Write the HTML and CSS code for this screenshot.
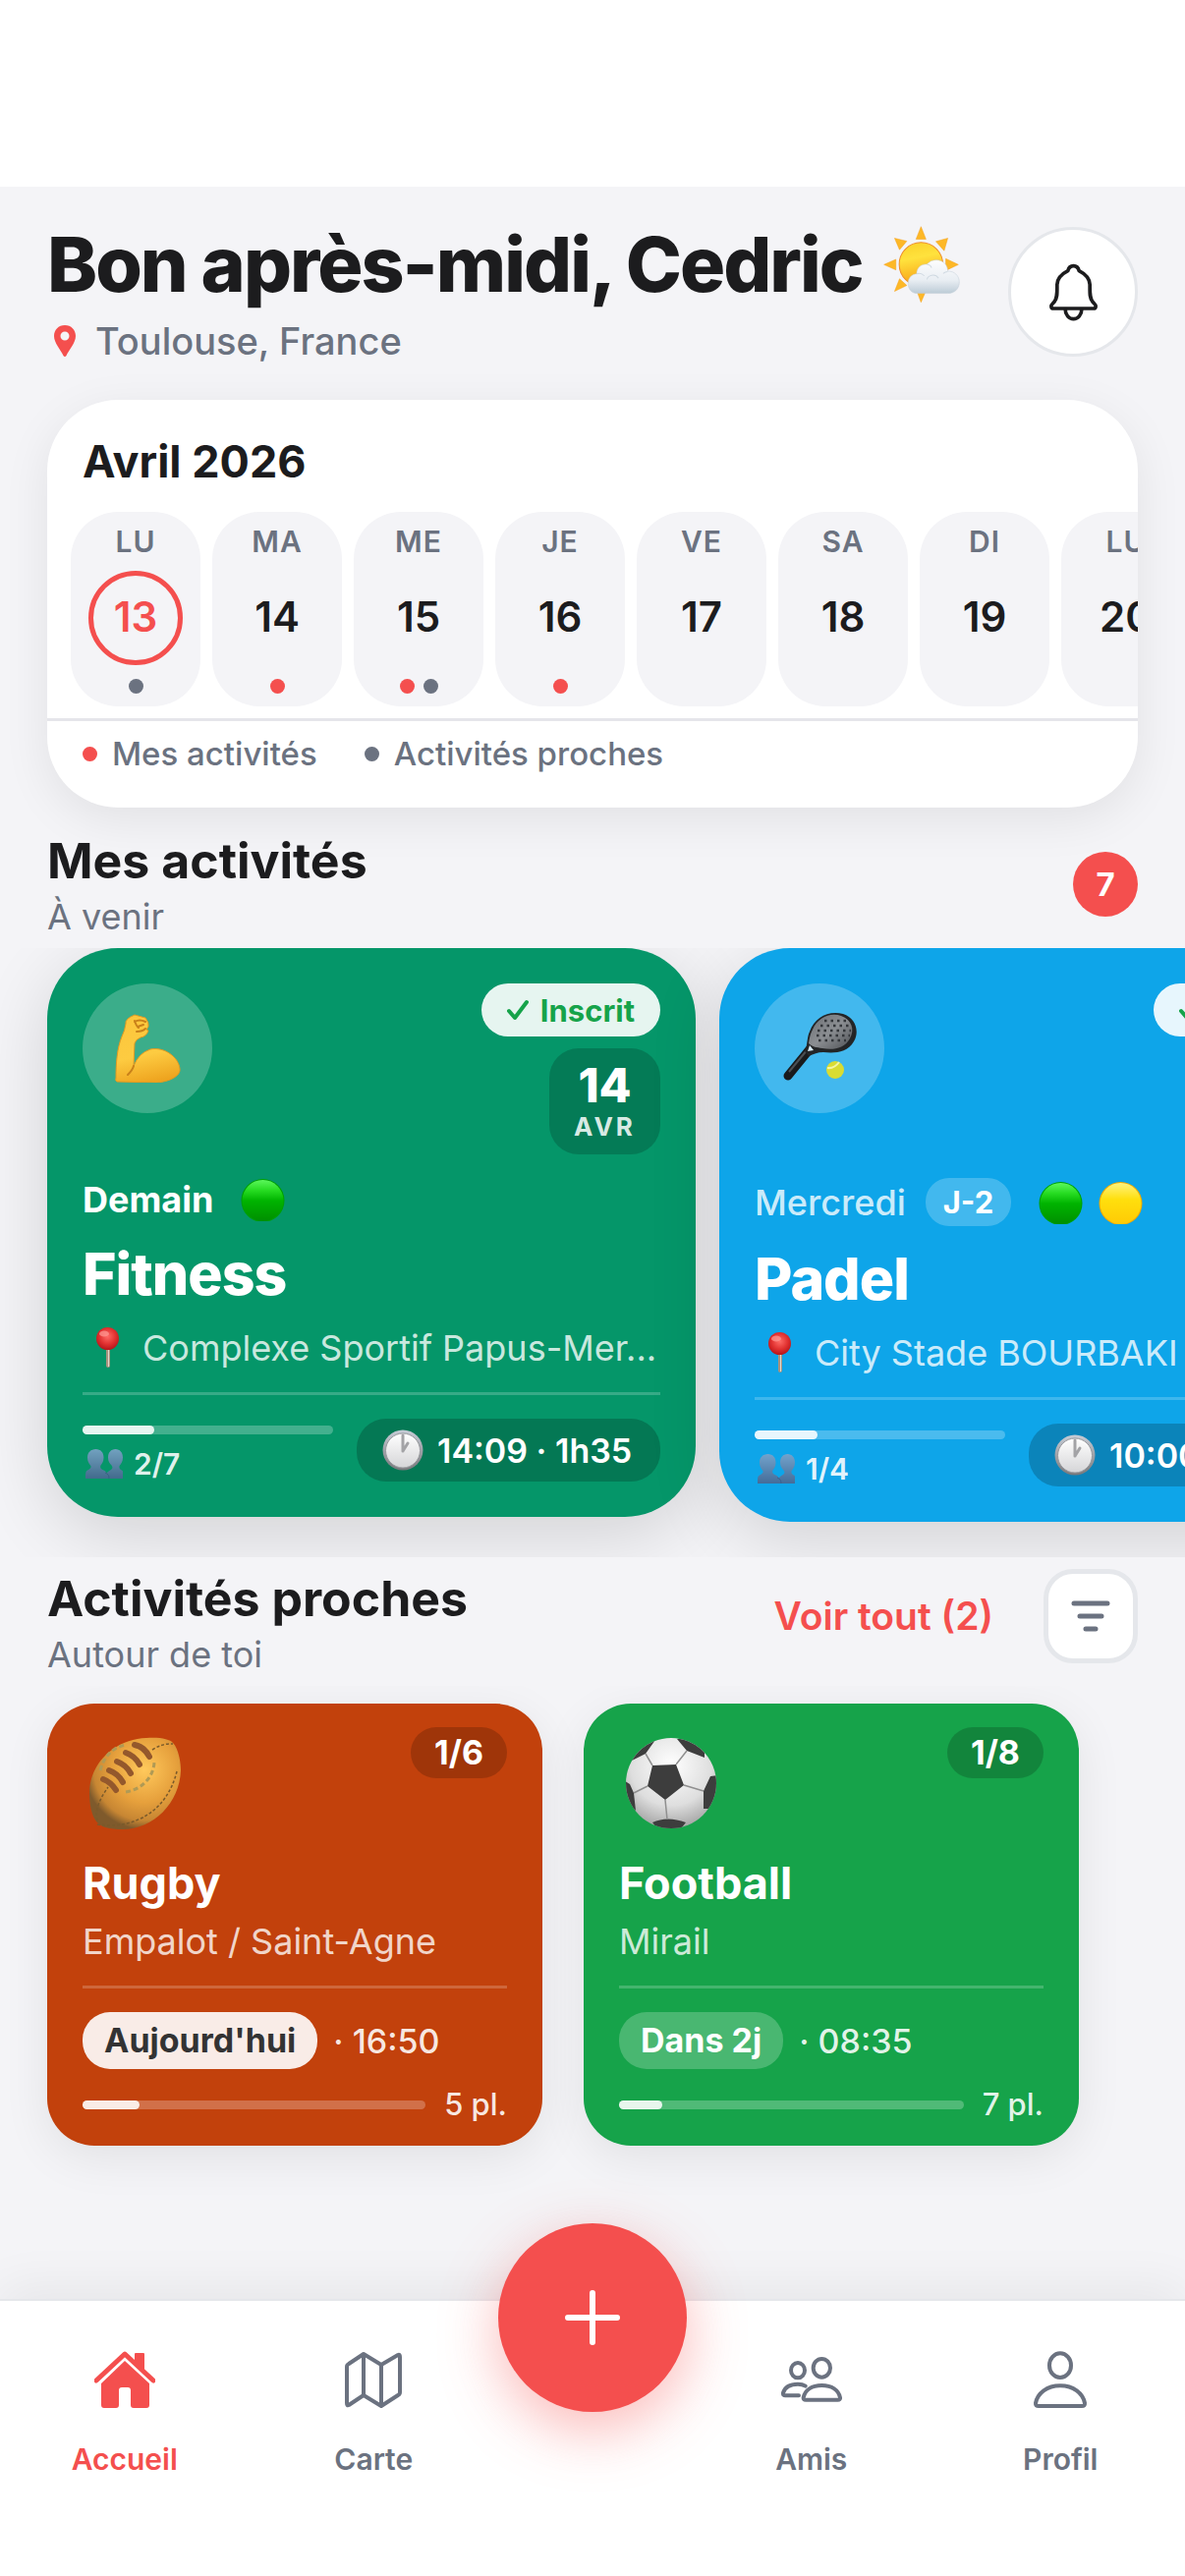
FILE: index.html
```html
<!DOCTYPE html>
<html lang="fr">
<head>
<meta charset="utf-8">
<meta name="viewport" content="width=device-width, initial-scale=1">
<title>Accueil</title>
<link rel="stylesheet" href="styles.css">
</head>
<body>

<svg class="sprite" width="0" height="0" aria-hidden="true">
  <defs>
    <linearGradient id="g-sun" x1="0.3" y1="0" x2="0.5" y2="1"><stop offset="0" stop-color="#fbd32c"/><stop offset="0.35" stop-color="#ffe23d"/><stop offset="1" stop-color="#f79a12"/></linearGradient>
    <linearGradient id="g-cloud" x1="0" y1="0" x2="0" y2="1"><stop offset="0" stop-color="#fdfdfe"/><stop offset="0.6" stop-color="#e9eef3"/><stop offset="1" stop-color="#bccbd6"/></linearGradient>
    <linearGradient id="g-arm" x1="0.3" y1="0" x2="0.5" y2="1"><stop offset="0" stop-color="#fcc63c"/><stop offset="0.6" stop-color="#fdcb41"/><stop offset="1" stop-color="#eea41f"/></linearGradient>
    <linearGradient id="g-green" x1="0" y1="0" x2="0" y2="1"><stop offset="0" stop-color="#5cf75c"/><stop offset="0.25" stop-color="#27dc22"/><stop offset="0.5" stop-color="#00b400"/><stop offset="1" stop-color="#008f00"/></linearGradient>
    <linearGradient id="g-yellow" x1="0" y1="0" x2="0" y2="1"><stop offset="0" stop-color="#fff27d"/><stop offset="0.4" stop-color="#ffdf0d"/><stop offset="1" stop-color="#ffca05"/></linearGradient>
    <linearGradient id="g-racket" x1="0" y1="0" x2="1" y2="1"><stop offset="0" stop-color="#6d7074"/><stop offset="0.5" stop-color="#8b8e92"/><stop offset="1" stop-color="#4e5155"/></linearGradient>
    <radialGradient id="g-pin" cx="0.5" cy="0.4" r="0.6"><stop offset="0" stop-color="#ff6b66"/><stop offset="0.6" stop-color="#e0302f"/><stop offset="1" stop-color="#b5161b"/></radialGradient>
    <linearGradient id="g-people" x1="0" y1="0" x2="0" y2="1"><stop offset="0" stop-color="#7ea3c9"/><stop offset="1" stop-color="#4a6791"/></linearGradient>
    <linearGradient id="g-clock" x1="0" y1="0" x2="0" y2="1"><stop offset="0" stop-color="#ffffff"/><stop offset="1" stop-color="#d5d5d7"/></linearGradient>
    <linearGradient id="g-rim" x1="0" y1="0" x2="0" y2="1"><stop offset="0" stop-color="#c6ccd6"/><stop offset="1" stop-color="#77787b"/></linearGradient>
    <radialGradient id="g-rugby" cx="0.6" cy="0.35" r="0.65"><stop offset="0" stop-color="#ffc95c"/><stop offset="0.55" stop-color="#e6a03c"/><stop offset="0.85" stop-color="#c78633"/><stop offset="1" stop-color="#7f5a2c"/></radialGradient>
    <radialGradient id="g-ball" cx="0.5" cy="0.3" r="0.75"><stop offset="0" stop-color="#ffffff"/><stop offset="0.6" stop-color="#dedede"/><stop offset="1" stop-color="#9a9a9a"/></radialGradient>
    <clipPath id="c-ball"><circle cx="46" cy="46" r="46"/></clipPath>

    <symbol id="e-dot-green" viewBox="0 0 45 44"><circle cx="22.5" cy="23" r="22" fill="#00a000"/><circle cx="22.5" cy="23" r="21" fill="url(#g-green)"/></symbol>
    <symbol id="e-dot-yellow" viewBox="0 0 45 44"><circle cx="22.5" cy="23" r="22" fill="#f2a900"/><circle cx="22.5" cy="23" r="21" fill="url(#g-yellow)"/></symbol>
    <symbol id="e-pin" viewBox="0 0 50 42">
      <rect x="24" y="18" width="4" height="23" rx="2" fill="#a9937f"/><rect x="26" y="20" width="1" height="20" fill="#e3d9cd"/>
      <circle cx="25.500" cy="11.500" r="11.500" fill="url(#g-pin)"/><ellipse cx="22" cy="6.500" rx="5" ry="3" fill="#ff9b95" opacity="0.7"/>
    </symbol>
    <symbol id="e-people" viewBox="0 0 38 30">
      <path fill="url(#g-people)" d="M10.500 0c5 0 8 3.500 8 8.500 0 4-1.500 6-3 8-1 2 0 4 3 5 1.500.8 2.500 1.500 3 3 1-2 4-3 5-4 1.500-1.200 1-2.500 0-4-2-2-3.500-4-3.500-8 0-5 3-8.500 7.500-8.500s7.500 3.500 7.500 8.500c0 4-1.500 6-3 8s0 4 2 5c2 1 1 4 1 8.500H0c0-5 0-7.500 2-8.500 3-1.500 4.500-3 3-5s-3-4-3-8C2 3.500 5.500 0 10.500 0z"/>
      <path d="M24 30c0-3-1-5-4-6" fill="none" stroke="#3f5c88" stroke-width="1"/>
    </symbol>
    <symbol id="e-clock" viewBox="0 0 42 42">
      <circle cx="21" cy="21" r="20.500" fill="url(#g-rim)"/><circle cx="21" cy="21.500" r="17.500" fill="url(#g-clock)" stroke="#98999d" stroke-width="1"/>
      <path d="M21 6v16M21 22l5-8" fill="none" stroke="#a3a3a6" stroke-width="3" stroke-linecap="round"/>
    </symbol>
    <symbol id="i-check" viewBox="0 0 22 22"><path d="M2 12l6 7L20 3" fill="none" stroke="currentColor" stroke-width="4" stroke-linecap="round" stroke-linejoin="round"/></symbol>
  </defs>
</svg>

<div class="safe-area"></div>

<main class="screen">
  <header class="greeting">
    <div class="greeting-text">
      <h1 class="greeting-title">Bon après-midi, Cedric
        <svg class="greeting-sun" viewBox="48 38 232 232" aria-hidden="true">
          <g fill="#fdb827" stroke="#f5a21c" stroke-width="1.500">
            <path d="M162 40l15 38h-30zM50 155l36-16v32zM275 155l-38-18v36zM82 75l37 9-22 26zM243 75l-11 38-25-28zM82 236l15-38 22 20zM162 269l-11-30h24z"/>
          </g>
          <circle cx="162" cy="154" r="66" fill="url(#g-sun)" stroke="#ee8f2b" stroke-width="3"/>
          <path fill="url(#g-cloud)" stroke="#c3d0da" stroke-width="1.500" d="M150 242c-16 0-27-13-27-30 0-17 11-28 26-29-1-18 14-31 31-29 7-9 17-13 29-13 20 0 34 15 34 34 20-1 35 14 35 33 0 20-14 34-35 34z"/>
          <path fill="none" stroke="#cfd9e1" stroke-width="3" d="M149 183c8-3 17 0 23 6M180 200c2-13 25-20 35-4M180 155c6 0 12 4 14 10M243 176c-6 0-10 2-14 6"/>
        </svg>
      </h1>
      <p class="greeting-place">
        <svg class="greeting-pin" viewBox="0 0 22 32" aria-hidden="true"><path fill="currentColor" fill-rule="evenodd" d="M11 0c6.500 0 11 4.800 11 11 0 7-7 14.500-9.500 20-.7 1.300-2.300 1.300-3 0C7 25.500 0 18 0 11 0 4.800 4.500 0 11 0zm0 6.500a4.500 4.500 0 1 0 0 9 4.500 4.500 0 0 0 0-9z"/></svg>
        Toulouse, France
      </p>
    </div>
    <button class="bell" type="button" aria-label="Notifications">
      <svg class="bell-icon" viewBox="560 140 152 180" aria-hidden="true"><path fill="none" stroke="currentColor" stroke-width="11" stroke-linejoin="round" d="M636 151c-10 0-15 7-17 15-16 8-32 20-33 42 0 27 1 40-8 52-6 7-10 9-10 14q0 7 8 7h120q8 0 8-7c0-5-4-7-10-14-9-12-8-25-8-52-1-22-17-34-33-42-2-8-7-15-17-15zM611 284a25 29 0 0 0 50 0"/></svg>
    </button>
  </header>

  <section class="calendar">
    <h2 class="calendar-title">Avril 2026</h2>
    <div class="days">
      <button class="day day-today" type="button"><span class="day-name">LU</span><span class="day-number">13</span><span class="day-dots"><i class="dot dot-near"></i></span></button>
      <button class="day" type="button"><span class="day-name">MA</span><span class="day-number">14</span><span class="day-dots"><i class="dot dot-mine"></i></span></button>
      <button class="day" type="button"><span class="day-name">ME</span><span class="day-number">15</span><span class="day-dots"><i class="dot dot-mine"></i><i class="dot dot-near"></i></span></button>
      <button class="day" type="button"><span class="day-name">JE</span><span class="day-number">16</span><span class="day-dots"><i class="dot dot-mine"></i></span></button>
      <button class="day" type="button"><span class="day-name">VE</span><span class="day-number">17</span><span class="day-dots"></span></button>
      <button class="day" type="button"><span class="day-name">SA</span><span class="day-number">18</span><span class="day-dots"></span></button>
      <button class="day" type="button"><span class="day-name">DI</span><span class="day-number">19</span><span class="day-dots"></span></button>
      <button class="day" type="button"><span class="day-name">LU</span><span class="day-number">20</span><span class="day-dots"></span></button>
    </div>
    <div class="legend">
      <span class="legend-item"><i class="dot dot-mine"></i>Mes activités</span>
      <span class="legend-item"><i class="dot dot-near"></i>Activités proches</span>
    </div>
  </section>

  <section>
    <div class="section-head section-head-mine">
      <div>
        <h2 class="section-title">Mes activités</h2>
        <p class="section-sub">À venir</p>
      </div>
      <span class="count">7</span>
    </div>
    <div class="carousel">
      <article class="event event-fitness">
        <div class="event-top">
          <div class="event-icon">
            <svg class="emoji-arm" viewBox="0 0 67 70" aria-hidden="true">
              <path fill="url(#g-arm)" stroke="#e09a22" stroke-width="1" d="M20 1l11 3q4 5 3 9l-2 3 2 1q-2 6-8 7-5 2-6 6l-1 23q5-13 17-17c14-3 29 8 30 20 1 7-10 13-24 14l-40-1q-2-1-1-4c0-14 1-30 6-42q3-6 4-13-1-5 9-9z"/>
              <path fill="none" stroke="#c9811a" stroke-width="2" stroke-linecap="round" d="M20 8q5-3 11 0M23 13l6-2M20 7q2 6 4 7M22 18q6 0 9-3M19 53q-1 4-6 9"/>
            </svg>
          </div>
          <div class="event-side">
            <span class="joined"><svg class="joined-check" aria-hidden="true"><use href="#i-check"/></svg>Inscrit</span>
            <div class="date"><span class="date-day">14</span><span class="date-month">AVR</span></div>
          </div>
        </div>
        <div class="event-when"><span class="when-soon">Demain</span><span class="levels"><svg class="level"><use href="#e-dot-green"/></svg></span></div>
        <h3 class="event-title">Fitness</h3>
        <p class="event-place"><svg class="place-pin" aria-hidden="true"><use href="#e-pin"/></svg><span class="place-name">Complexe Sportif Papus-Mer...</span></p>
        <div class="event-foot">
          <div class="fill"><div class="bar"><div class="bar-value" style="width: 28.57%"></div></div><span class="people"><svg class="people-icon" aria-hidden="true"><use href="#e-people"/></svg>2/7</span></div>
          <span class="time"><svg class="time-clock" aria-hidden="true"><use href="#e-clock"/></svg>14:09 · 1h35</span>
        </div>
      </article>

      <article class="event event-padel">
        <div class="event-top">
          <div class="event-icon">
            <svg class="emoji-padel" viewBox="0 0 78 76" aria-hidden="true">
              <path d="M29 39L7 66" stroke="#191a1c" stroke-width="9" stroke-linecap="round"/><path d="M27 39L8 62" stroke="#4c4f53" stroke-width="2"/>
              <path d="M24 41c3-6 2-14 5-20C34 6 49-1 63 3c13 4 17 18 11 28-7 12-20 12-31 11-6 0-10 2-15 4z" fill="#232527"/>
              <path d="M28 33c1-5 1-8 4-14C37 7 50 1 61 5c11 4 14 14 9 23-6 11-18 12-28 10-6-1-10-1-14-5z" fill="url(#g-racket)"/>
              <g stroke="#33363a" stroke-width="2.500" stroke-dasharray="2.500 4" fill="none"><path d="M44 10h24M40 15h32M37 20h34M36 25h34M38 30h28"/></g>
              <path d="M29 35l4 5-6 1z" fill="#d8ecf8"/>
              <circle cx="55" cy="60" r="9" fill="#d9dc32"/><path d="M47 58q7 1 12-6" fill="none" stroke="#f4f5a4" stroke-width="2"/>
            </svg>
          </div>
          <div class="event-side">
            <span class="joined"><svg class="joined-check" aria-hidden="true"><use href="#i-check"/></svg>Inscrit</span>
            <div class="date"><span class="date-day">15</span><span class="date-month">AVR</span></div>
          </div>
        </div>
        <div class="event-when"><span class="when-later">Mercredi</span><span class="countdown">J-2</span><span class="levels"><svg class="level"><use href="#e-dot-green"/></svg><svg class="level"><use href="#e-dot-yellow"/></svg></span></div>
        <h3 class="event-title">Padel</h3>
        <p class="event-place"><svg class="place-pin" aria-hidden="true"><use href="#e-pin"/></svg><span class="place-name">City Stade BOURBAKI</span></p>
        <div class="event-foot">
          <div class="fill"><div class="bar"><div class="bar-value" style="width: 25%"></div></div><span class="people"><svg class="people-icon" aria-hidden="true"><use href="#e-people"/></svg>1/4</span></div>
          <span class="time"><svg class="time-clock" aria-hidden="true"><use href="#e-clock"/></svg>10:00 · 1h30</span>
        </div>
      </article>
    </div>
  </section>

  <section>
    <div class="section-head section-head-near">
      <div>
        <h2 class="section-title">Activités proches</h2>
        <p class="section-sub">Autour de toi</p>
      </div>
      <div class="section-actions">
        <a class="see-all" href="#proches">Voir tout (2)</a>
        <button class="filter" type="button" aria-label="Filtrer"><svg class="filter-icon" viewBox="0 0 40 34" aria-hidden="true"><path d="M3 4h34M9 17h22M15 30h10" fill="none" stroke="currentColor" stroke-width="5" stroke-linecap="round"/></svg></button>
      </div>
    </div>
    <div class="carousel carousel-near" id="proches">
      <article class="nearby nearby-rugby">
        <div class="nearby-top">
          <svg class="nearby-emoji" viewBox="-7 -11 108 108" aria-hidden="true">
            <path fill="url(#g-rugby)" d="M58 0c13-1 24 1 27 5 5 5 8 18 8 28C92 66 65 93 34 93c-14 0-22-2-27-8C2 78 0 68 0 55 1 24 27 1 58 0z"/>
            <g fill="none" stroke="#7a5a2b" stroke-width="1.500" stroke-dasharray="3 2"><path d="M8 84C5 72 12 60 19 50M64 12q11-7 21-6M8 88c34 5 70-10 81-54"/></g>
            <path d="M37 55c18-3 28-16 29-30M11 33C15 18 24 9 38 7" fill="none" stroke="#b09a55" stroke-width="3" stroke-dasharray="5 3"/>
            <g fill="none" stroke="#94582c" stroke-width="6" stroke-linecap="round"><path d="M14 42q8 3 13 11M20 33q9 3 14 12M28 24q9 3 14 12M37 15q9 3 14 12M46 7q10 2 15 12"/></g>
          </svg>
          <span class="seats">1/6</span>
        </div>
        <h3 class="nearby-title">Rugby</h3>
        <p class="nearby-place">Empalot / Saint-Agne</p>
        <div class="nearby-when"><span class="tag tag-today">Aujourd'hui</span><span>· 16:50</span></div>
        <div class="nearby-fill"><div class="bar bar-wide"><div class="bar-value" style="width: 16.67%"></div></div><span>5 pl.</span></div>
      </article>
      <article class="nearby nearby-football">
        <div class="nearby-top">
          <svg class="nearby-emoji" viewBox="-7 -11 108 108" aria-hidden="true">
            <circle cx="46" cy="46" r="46" fill="url(#g-ball)"/>
            <g clip-path="url(#c-ball)"><path fill="#3d3d3d" d="M27 28l24-1 8 21-19 15-18-14zM30 2L20 16 4 24 5 5 20-5zM52 1l10 12 18 7V0zM93 38l-7 1-7 15v18h14zM27 86q15-7 34 0l-8 10H35zM-1 44l5 3 4 9 2 18-11-9z"/>
            <path fill="none" stroke="#8f8f8f" stroke-width="1.500" d="M27 28l-7-12M51 27l11-14M59 48l20 6M40 63l2 20M22 49L8 56"/></g>
          </svg>
          <span class="seats">1/8</span>
        </div>
        <h3 class="nearby-title">Football</h3>
        <p class="nearby-place">Mirail</p>
        <div class="nearby-when"><span class="tag">Dans 2j</span><span>· 08:35</span></div>
        <div class="nearby-fill"><div class="bar bar-wide"><div class="bar-value" style="width: 12.5%"></div></div><span>7 pl.</span></div>
      </article>
    </div>
  </section>
</main>

<nav class="tabs">
  <a class="tab tab-active" href="#accueil"><svg class="tab-icon" viewBox="0 0 62 58" aria-hidden="true"><path d="M2 30L31 3l29 27" fill="none" stroke="currentColor" stroke-width="5" stroke-linecap="round" stroke-linejoin="round"/><path fill="currentColor" d="M41 3q0-1 1-1h8q1 0 1 1v19L41 12zM31 10l25 23v22q0 3-3 3H40q-3 0-3-3V40q0-3-3-3h-6q-3 0-3 3v15q0 3-3 3H10q-3 0-3-3V33z"/></svg><span>Accueil</span></a>
  <a class="tab" href="#carte"><svg class="tab-icon" viewBox="-1 0 62 58" aria-hidden="true"><path d="M3 16q0-2 2-3L20 3l18 11L55 4q2-1 2 2v36q0 2-2 3L38 56 20 45 5 55q-2 1-2-2zM20 3v42M38 14v42" fill="none" stroke="currentColor" stroke-width="4" stroke-linejoin="round"/></svg><span>Carte</span></a>
  <button class="add" type="button" aria-label="Créer une activité"><svg class="add-icon" viewBox="0 0 56 56" aria-hidden="true"><path d="M28 3v50M3 28h50" stroke="currentColor" stroke-width="6" stroke-linecap="round"/></svg></button>
  <a class="tab" href="#amis"><svg class="tab-icon" viewBox="45 40 186 174" aria-hidden="true"><g fill="none" stroke="currentColor" stroke-width="12" stroke-linecap="round" stroke-linejoin="round"><ellipse cx="96" cy="99" rx="21" ry="23"/><ellipse cx="169" cy="92" rx="26" ry="28"/><path d="M120 189q-8 0-7-7c5-22 25-37 56-37s51 15 56 37q1 7-7 7zM99 176H58q-8 0-7-8c5-17 20-27 45-27q14 0 23 6"/></g></svg><span>Amis</span></a>
  <a class="tab" href="#profil"><svg class="tab-icon" viewBox="807 39 186 174" aria-hidden="true"><g fill="none" stroke="currentColor" stroke-width="12" stroke-linejoin="round"><ellipse cx="900" cy="83" rx="33" ry="37"/><path d="M834 207q-10 0-9-9c6-30 34-53 75-53s69 23 75 53q1 9-9 9z"/></g></svg><span>Profil</span></a>
</nav>

</body>
</html>
```

FILE: styles.css
```css
:root {
  --red: #f44f4e;
  --ink: #1c1c1e;
  --gray: #6b7280;
  --bg: #f4f4f7;
  --line: #e5e5ea;
}

* { box-sizing: border-box; }

body {
  margin: 0;
  min-height: 100vh;
  display: flex;
  flex-direction: column;
  background: var(--bg);
  color: var(--ink);
  font-family: Inter, "Liberation Sans", sans-serif;
  overflow-x: hidden;
}

h1, h2, h3, p { margin: 0; }
button { font: inherit; color: inherit; border: 0; padding: 0; }
a { color: inherit; text-decoration: none; }
svg { display: block; flex: none; }
.sprite { position: absolute; }

.safe-area { height: 190px; background: #fff; }
.screen { flex: 1; }

/* Greeting */
.greeting {
  display: flex;
  align-items: center;
  justify-content: space-between;
  padding: 33px 48px 36px;
}
.greeting-text { display: flex; flex-direction: column; gap: 8px; }
.greeting-title {
  display: flex;
  align-items: center;
  gap: 21px;
  font-size: 77px;
  line-height: 92px;
  font-weight: 800;
  letter-spacing: -2px;
}
.greeting-sun { width: 78px; height: 78px; }
.greeting-place {
  display: flex;
  align-items: center;
  gap: 20px;
  padding-left: 7px;
  font-size: 38px;
  line-height: 48px;
  font-weight: 500;
  color: var(--gray);
}
.greeting-pin { width: 22px; height: 32px; color: var(--red); }
.bell {
  width: 132px;
  height: 132px;
  display: grid;
  place-items: center;
  border: 3px solid #e5e7eb;
  border-radius: 50%;
  background: #fff;
}
.bell-icon { width: 51px; height: 60px; }

/* Calendar */
.calendar {
  margin: 0 48px;
  padding-top: 36px;
  border-radius: 72px;
  background: #fff;
  box-shadow: 0 12px 48px rgba(0, 0, 0, 0.08);
}
.calendar-title {
  padding: 0 36px;
  margin-bottom: 24px;
  font-size: 45px;
  line-height: 54px;
  font-weight: 700;
}
.days {
  display: flex;
  gap: 12px;
  padding: 0 0 12px 24px;
  overflow: hidden;
}
.day {
  flex: 0 0 132px;
  display: flex;
  flex-direction: column;
  align-items: center;
  gap: 12px;
  padding: 12px 0;
  border-radius: 48px;
  background: var(--bg);
}
.day-name {
  font-size: 30px;
  line-height: 36px;
  font-weight: 600;
  letter-spacing: 1px;
  color: var(--gray);
}
.day-number {
  width: 96px;
  height: 96px;
  border: 5px solid transparent;
  border-radius: 50%;
  font-size: 42px;
  line-height: 84px;
  font-weight: 600;
  text-align: center;
}
.day-today .day-number { border-color: var(--red); color: var(--red); }
.day-dots { display: flex; align-items: center; gap: 9px; height: 18px; }
.dot { flex: none; width: 15px; height: 15px; border-radius: 50%; }
.dot-mine { background: var(--red); }
.dot-near { background: var(--gray); }
.legend {
  display: flex;
  gap: 48px;
  padding: 12px 36px 34px;
  border-top: 3px solid var(--line);
  font-size: 33px;
  line-height: 42px;
  font-weight: 500;
  color: var(--gray);
}
.legend-item { display: flex; align-items: center; gap: 15px; }

/* Section headings */
.section-head {
  display: flex;
  justify-content: space-between;
  padding: 24px 48px 11px;
}
.section-head-mine { align-items: center; }
.section-head-near { padding-top: 12px; }
.section-title { font-size: 50px; line-height: 60px; font-weight: 700; }
.section-sub { margin-top: 6px; font-size: 36px; line-height: 42px; color: var(--gray); }
.count {
  width: 66px;
  height: 66px;
  display: grid;
  place-items: center;
  border-radius: 50%;
  background: var(--red);
  color: #fff;
  font-size: 33px;
  font-weight: 700;
}
.section-actions { display: flex; align-items: center; align-self: flex-start; gap: 51px; }
.see-all { font-size: 39px; line-height: 48px; font-weight: 600; color: var(--red); }
.filter {
  width: 96px;
  height: 96px;
  display: grid;
  place-items: center;
  border: 5px solid #e5e7eb;
  border-radius: 30px;
  background: #fff;
  color: var(--gray);
}
.filter-icon { width: 40px; height: 34px; }

/* Registered activities */
.carousel {
  display: flex;
  align-items: flex-start;
  gap: 24px;
  padding: 0 48px 36px;
  overflow: hidden;
}
.event {
  flex: 0 0 660px;
  padding: 36px;
  border-radius: 72px;
  color: #fff;
  box-shadow: 0 18px 72px rgba(0, 0, 0, 0.14);
}
.event-fitness { background: #059669; }
.event-padel { background: #0ea5e9; }
.event-top { display: flex; justify-content: space-between; align-items: flex-start; }
.event-icon {
  width: 132px;
  height: 132px;
  display: grid;
  place-items: center;
  border-radius: 50%;
  background: rgba(255, 255, 255, 0.22);
}
.emoji-arm { width: 67px; height: 70px; }
.emoji-padel { width: 78px; height: 76px; }
.event-side { display: flex; flex-direction: column; align-items: flex-end; gap: 12px; }
.joined {
  display: flex;
  align-items: center;
  gap: 12px;
  height: 54px;
  padding: 0 26px;
  border-radius: 27px;
  background: rgba(255, 255, 255, 0.9);
  color: #16a34a;
  font-size: 31px;
  font-weight: 700;
}
.joined-check { width: 22px; height: 22px; }
.date {
  display: flex;
  flex-direction: column;
  align-items: center;
  min-width: 113px;
  height: 108px;
  padding: 12px 24px;
  border-radius: 30px;
  background: rgba(0, 0, 0, 0.18);
}
.date-day { font-size: 48px; line-height: 52px; font-weight: 800; }
.date-month {
  font-size: 26px;
  line-height: 32px;
  font-weight: 700;
  letter-spacing: 3px;
  color: rgba(255, 255, 255, 0.85);
}
.event-when {
  display: flex;
  align-items: center;
  gap: 20px;
  margin-top: 24px;
  font-size: 36px;
  line-height: 44px;
}
.when-soon { font-weight: 700; }
.when-later { font-weight: 500; color: rgba(255, 255, 255, 0.8); }
.countdown {
  padding: 0 18px;
  border-radius: 24px;
  background: rgba(255, 255, 255, 0.22);
  font-size: 31px;
  line-height: 49px;
  font-weight: 700;
}
.levels { display: flex; gap: 16px; padding-left: 8px; }
.level { width: 45px; height: 44px; }
.event-title {
  margin: 18px 0;
  font-size: 59px;
  line-height: 72px;
  font-weight: 800;
  letter-spacing: -1px;
}
.event-place {
  display: flex;
  align-items: center;
  gap: 11px;
  font-size: 36px;
  line-height: 42px;
  color: rgba(255, 255, 255, 0.8);
}
.place-pin { width: 50px; height: 42px; }
.place-name { white-space: nowrap; overflow: hidden; text-overflow: ellipsis; }
.event-foot {
  display: flex;
  align-items: flex-end;
  gap: 24px;
  margin-top: 24px;
  padding-top: 24px;
  border-top: 3px solid rgba(255, 255, 255, 0.2);
}
.fill { flex: 1; display: flex; flex-direction: column; gap: 12px; }
.bar { height: 9px; border-radius: 5px; background: rgba(255, 255, 255, 0.25); }
.bar-value { height: 100%; border-radius: 5px; background: rgba(255, 255, 255, 0.87); }
.people {
  display: flex;
  align-items: center;
  gap: 11px;
  padding-left: 3px;
  font-size: 30px;
  line-height: 36px;
  font-weight: 600;
  color: rgba(255, 255, 255, 0.9);
}
.people-icon { width: 38px; height: 30px; opacity: 0.9; }
.time {
  display: flex;
  align-items: center;
  gap: 14px;
  min-width: 309px;
  height: 64px;
  padding: 0 26px;
  border-radius: 30px;
  background: rgba(0, 0, 0, 0.2);
  font-size: 34px;
  font-weight: 600;
  white-space: nowrap;
}
.time-clock { width: 42px; height: 42px; }

/* Nearby activities */
.carousel-near { gap: 42px; padding-top: 18px; padding-bottom: 60px; }
.nearby {
  flex: 0 0 504px;
  padding: 24px 36px;
  border-radius: 48px;
  color: #fff;
  box-shadow: 0 12px 48px rgba(0, 0, 0, 0.08);
}
.nearby-rugby { background: #c2410c; }
.nearby-football { background: #16a34a; }
.nearby-top { display: flex; justify-content: space-between; align-items: flex-start; }
.nearby-emoji { width: 108px; height: 108px; }
.seats {
  padding: 0 24px;
  border-radius: 26px;
  background: rgba(0, 0, 0, 0.18);
  font-size: 34px;
  line-height: 52px;
  font-weight: 700;
}
.nearby-title { margin-top: 24px; font-size: 45px; line-height: 54px; font-weight: 700; }
.nearby-place {
  margin-top: 11px;
  padding-bottom: 24px;
  border-bottom: 3px solid rgba(255, 255, 255, 0.2);
  font-size: 36px;
  line-height: 42px;
  color: rgba(255, 255, 255, 0.8);
}
.nearby-when {
  display: flex;
  align-items: center;
  gap: 16px;
  margin-top: 24px;
  font-size: 34px;
  font-weight: 500;
  color: rgba(255, 255, 255, 0.9);
}
.tag {
  padding: 0 22px;
  border-radius: 28px;
  background: rgba(255, 255, 255, 0.22);
  color: #fff;
  font-size: 34px;
  line-height: 58px;
  font-weight: 700;
}
.tag-today { background: rgba(255, 255, 255, 0.9); color: #333; }
.nearby-fill {
  display: flex;
  align-items: center;
  gap: 19px;
  margin-top: 18px;
  font-size: 31px;
  line-height: 36px;
  font-weight: 500;
  color: rgba(255, 255, 255, 0.9);
}
.bar-wide { flex: 1; }

/* Tab bar */
.tabs {
  display: flex;
  align-items: flex-start;
  height: 282px;
  border-top: 2px solid #e5e7eb;
  background: #fff;
  box-shadow: 0 -12px 48px rgba(0, 0, 0, 0.06);
}
.tab {
  flex: 1;
  display: flex;
  flex-direction: column;
  align-items: center;
  gap: 34px;
  padding-top: 51px;
  font-size: 30px;
  line-height: 36px;
  font-weight: 600;
  color: var(--gray);
}
.tab-active { color: var(--red); }
.tab-icon { width: 62px; height: 58px; }
.add {
  flex: none;
  width: 192px;
  height: 192px;
  margin-top: -79px;
  display: grid;
  place-items: center;
  border-radius: 50%;
  background: var(--red);
  color: #fff;
  box-shadow: 0 18px 60px rgba(244, 79, 78, 0.4);
}
.add-icon { width: 56px; height: 56px; }
```
